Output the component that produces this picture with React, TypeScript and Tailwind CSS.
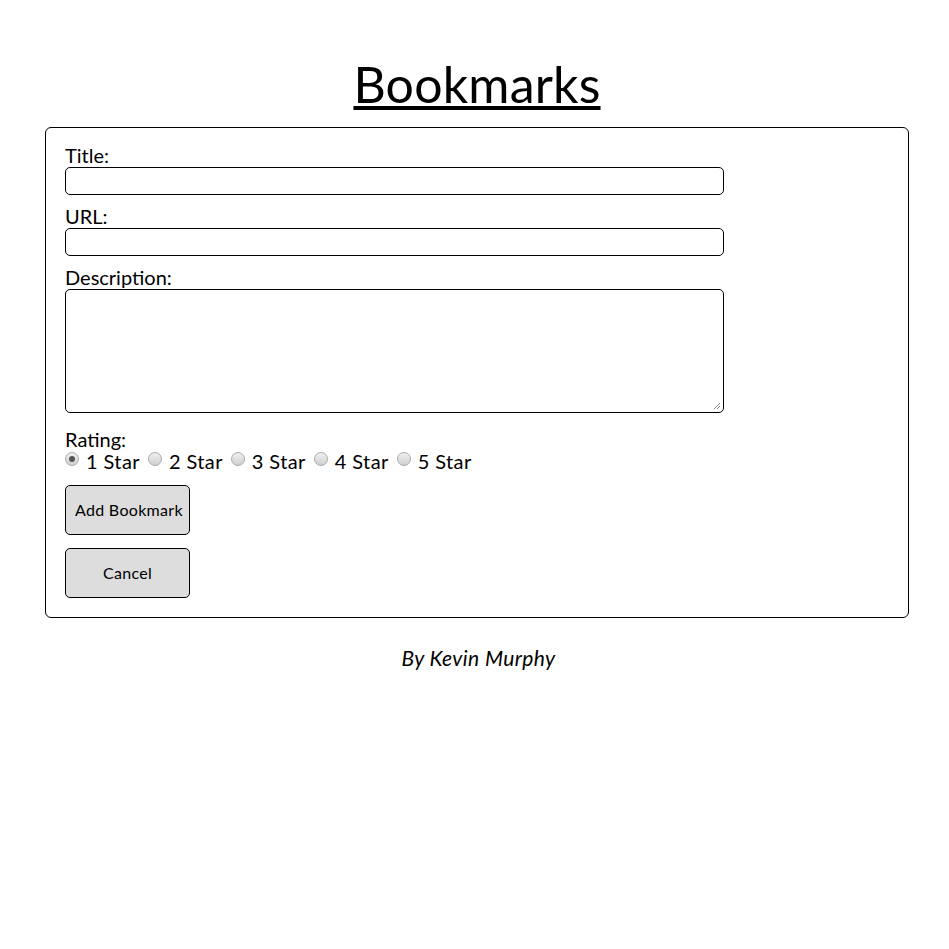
import React from "react";

const F = { fontFamily: "Lato, 'Open Sans', sans-serif" };

function Radio({ checked }: { checked?: boolean }) {
  return (
    <span className="inline-flex items-center justify-center w-[14px] h-[14px] rounded-full border border-[#a9a9a9] bg-gradient-to-b from-[#f0f0f0] to-[#d0d0d0] shrink-0">
      {checked ? <span className="w-[6px] h-[6px] rounded-full bg-[#555]" /> : null}
    </span>
  );
}

export default function App() {
  const stars = ["1 Star", "2 Star", "3 Star", "4 Star", "5 Star"];
  return (
    <div className="w-[949px] h-[949px] bg-white text-black" style={F}>
      <div className="h-[112px] pt-[56px] pl-[5px] flex justify-center">
        <h1 className="h-[56px] text-[50px] leading-[56px] underline decoration-[4px] underline-offset-[3px] tracking-[0.2px]">Bookmarks</h1>
      </div>
      <div className="mt-[15px] ml-[45px] w-[864px] border border-black rounded-[6px] pt-[15px] pb-[19px] px-[19px]">
        <div className="text-[20px] leading-[24px]">Title:</div>
        <div className="w-[659px] h-[28px] border border-black rounded-[5px]" />
        <div className="mt-[9px] text-[20px] leading-[24px]">URL:</div>
        <div className="w-[659px] h-[28px] border border-black rounded-[5px]" />
        <div className="mt-[9px] text-[20px] leading-[24px]">Description:</div>
        <div className="relative w-[659px] h-[124px] border border-black rounded-[5px]">
          <svg className="absolute right-[2px] bottom-[2px]" width="8" height="8" viewBox="0 0 8 8">
            <path d="M1 7 L7 1 M4 7 L7 4" stroke="#888" strokeWidth="1" />
          </svg>
        </div>
        <div className="mt-[14px] text-[20px] leading-[24px]">Rating:</div>
        <div className="flex items-center text-[20px] leading-[24px] mt-[-2px]">
          {stars.map((s, i) => (
            <span key={s} className="inline-flex items-center">
              <span className="mr-[7px] mt-[-4px] flex">
                <Radio checked={i === 0} />
              </span>
              <span className="mr-[8px] tracking-[0.4px]">{s}</span>
            </span>
          ))}
        </div>
        <div className="mt-[12px] w-[125px] h-[50px] border border-black rounded-[5px] bg-[#dddddd] flex items-center justify-start pl-[9px] text-[16px] tracking-[0.3px] whitespace-nowrap">
          Add Bookmark
        </div>
        <div className="mt-[13px] w-[125px] h-[50px] border border-black rounded-[5px] bg-[#dddddd] flex items-center justify-center text-[16px] tracking-[0.3px]">
          Cancel
        </div>
      </div>
      <div className="mt-[28px] pl-[8px] text-center italic text-[21px] leading-[24px] tracking-[0.4px]">By Kevin Murphy</div>
    </div>
  );
}
